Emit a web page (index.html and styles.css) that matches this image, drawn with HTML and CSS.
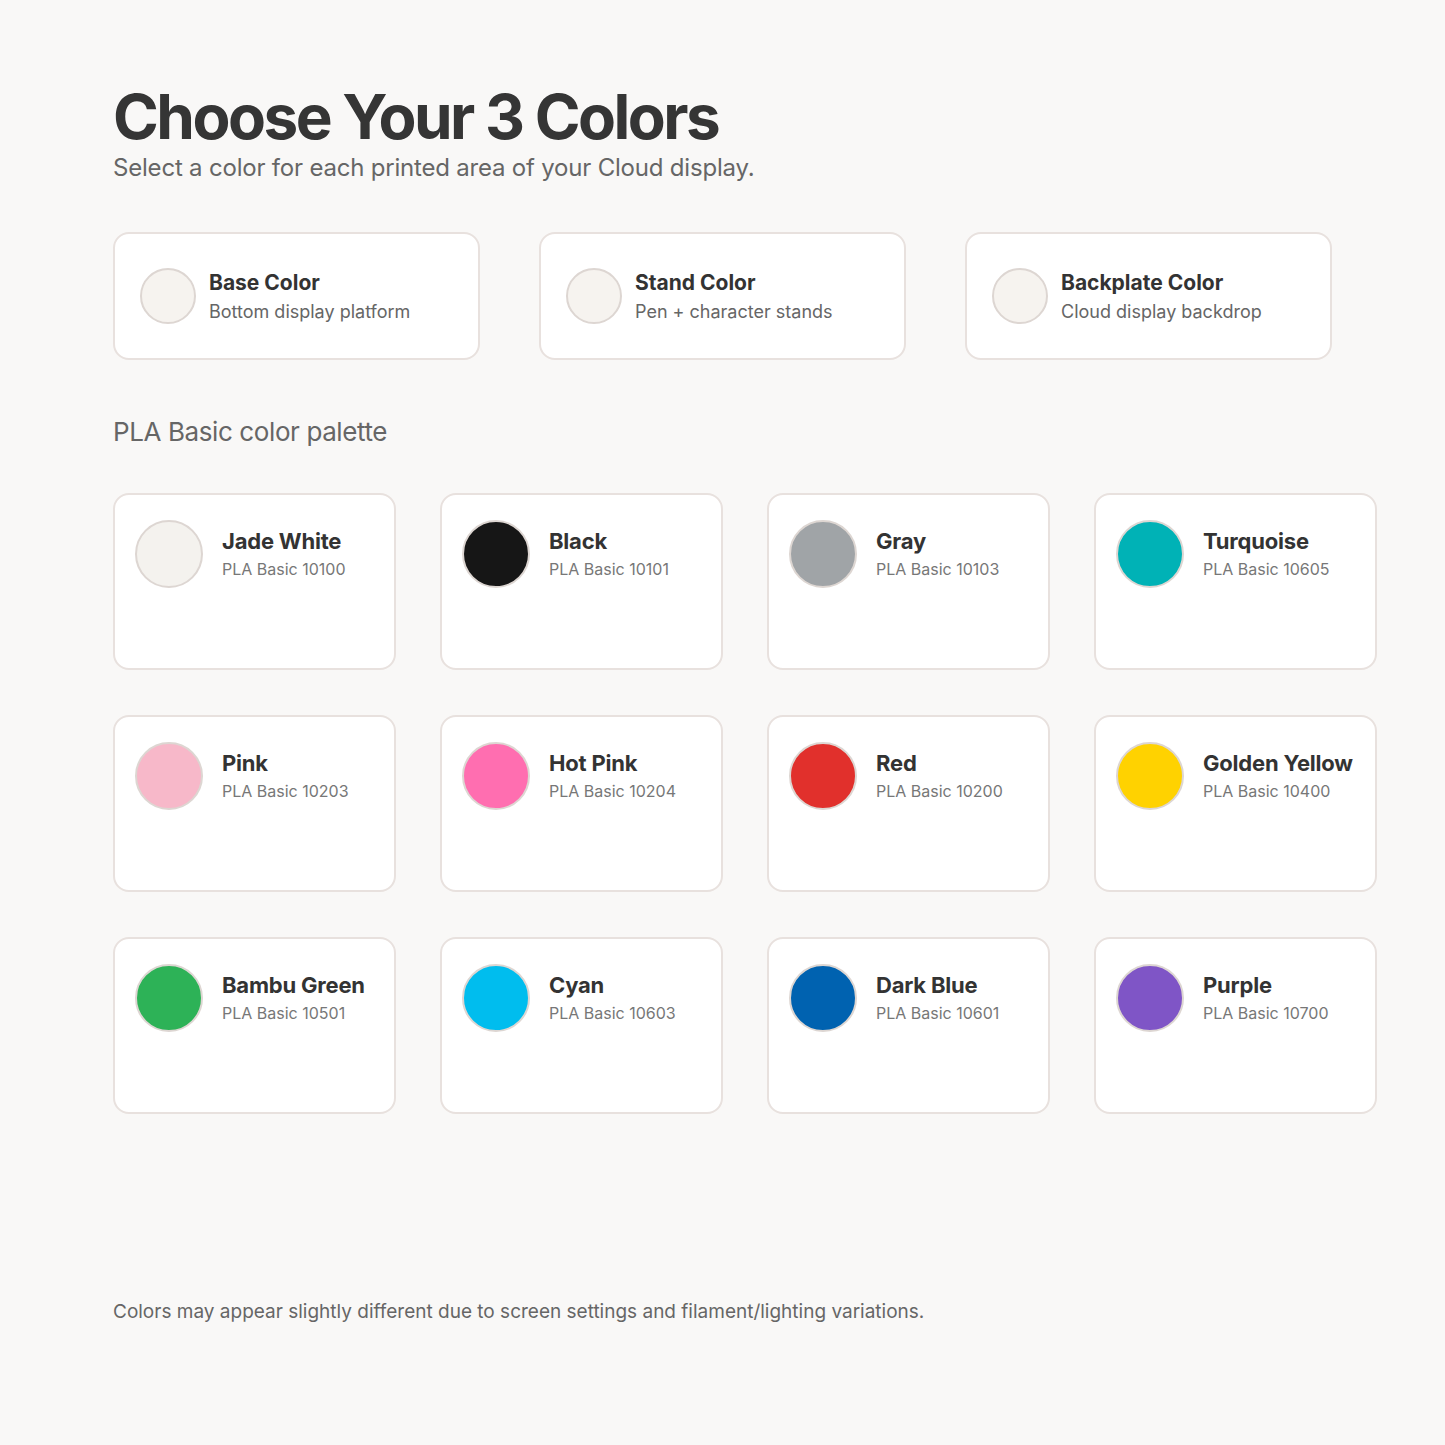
FILE: index.html
```html
<!DOCTYPE html>
<html lang="en">
<head>
  <meta charset="UTF-8" />
  <meta name="viewport" content="width=device-width, initial-scale=1.0" />
  <title>Choose Your 3 Colors</title>
  <link rel="stylesheet" href="styles.css">
</head>
<body>
  <div class="container">
    <h1 class="page-title">Choose Your 3 Colors</h1>
    <p class="page-sub">Select a color for each printed area of your Cloud display.</p>

    <div class="target-grid">
      <div class="target-card">
        <div class="swatch swatch-lg"></div>
        <div>
          <div class="target-name">Base Color</div>
          <div class="target-desc">Bottom display platform</div>
        </div>
      </div>
      <div class="target-card">
        <div class="swatch swatch-lg"></div>
        <div>
          <div class="target-name">Stand Color</div>
          <div class="target-desc">Pen + character stands</div>
        </div>
      </div>
      <div class="target-card">
        <div class="swatch swatch-lg"></div>
        <div>
          <div class="target-name">Backplate Color</div>
          <div class="target-desc">Cloud display backdrop</div>
        </div>
      </div>
    </div>

    <div class="palette-title">PLA Basic color palette</div>

    <div class="palette-grid">
      <div class="color-card"><div class="swatch" style="background:#f4f2ee"></div><div><div class="color-name">Jade White</div><div class="color-code">PLA Basic 10100</div></div></div>
      <div class="color-card"><div class="swatch" style="background:#161616"></div><div><div class="color-name">Black</div><div class="color-code">PLA Basic 10101</div></div></div>
      <div class="color-card"><div class="swatch" style="background:#a0a4a7"></div><div><div class="color-name">Gray</div><div class="color-code">PLA Basic 10103</div></div></div>
      <div class="color-card"><div class="swatch" style="background:#00b2b6"></div><div><div class="color-name">Turquoise</div><div class="color-code">PLA Basic 10605</div></div></div>
      <div class="color-card"><div class="swatch" style="background:#f7b8c9"></div><div><div class="color-name">Pink</div><div class="color-code">PLA Basic 10203</div></div></div>
      <div class="color-card"><div class="swatch" style="background:#ff6eb0"></div><div><div class="color-name">Hot Pink</div><div class="color-code">PLA Basic 10204</div></div></div>
      <div class="color-card"><div class="swatch" style="background:#e1302c"></div><div><div class="color-name">Red</div><div class="color-code">PLA Basic 10200</div></div></div>
      <div class="color-card"><div class="swatch" style="background:#ffd200"></div><div><div class="color-name">Golden Yellow</div><div class="color-code">PLA Basic 10400</div></div></div>
      <div class="color-card"><div class="swatch" style="background:#2db257"></div><div><div class="color-name">Bambu Green</div><div class="color-code">PLA Basic 10501</div></div></div>
      <div class="color-card"><div class="swatch" style="background:#00bdee"></div><div><div class="color-name">Cyan</div><div class="color-code">PLA Basic 10603</div></div></div>
      <div class="color-card"><div class="swatch" style="background:#0062b0"></div><div><div class="color-name">Dark Blue</div><div class="color-code">PLA Basic 10601</div></div></div>
      <div class="color-card"><div class="swatch" style="background:#7f55c6"></div><div><div class="color-name">Purple</div><div class="color-code">PLA Basic 10700</div></div></div>
    </div>

    <p class="footnote">Colors may appear slightly different due to screen settings and filament/lighting variations.</p>
  </div>
</body>
</html>
```

FILE: styles.css
```css
body {
  background-color: #f9f8f7;
  font-family: Inter, 'Noto Sans', sans-serif;
  color: #333;
  margin: 0;
}
.container {
  padding: 80px 68px 80px 113px;
}
.page-title {
  font-size: 62px;
  font-weight: 700;
  letter-spacing: -2.5px;
  line-height: 1.2;
  color: #353535;
  margin: 0;
}
.page-sub {
  font-size: 24px;
  letter-spacing: -0.2px;
  color: #666;
  margin: 0;
  line-height: 1.2;
}
.target-grid {
  display: grid;
  grid-template-columns: repeat(3, 367px);
  gap: 59px;
  margin-top: 49px;
}
.target-card {
  background: #fff;
  border: 2px solid #e8e1de;
  border-radius: 16px;
  height: 128px;
  box-sizing: border-box;
  display: flex;
  align-items: center;
  gap: 13px;
  padding: 0 25px;
}
.target-name {
  font-size: 21px;
  font-weight: 700;
  color: #333;
}
.target-desc {
  font-size: 18px;
  color: #666;
  margin-top: 6px;
}
.swatch {
  width: 68px;
  height: 68px;
  border-radius: 50%;
  border: 2px solid #ddd6d2;
  box-sizing: border-box;
  flex-shrink: 0;
}
.swatch-lg {
  width: 56px;
  height: 56px;
  background: #f6f3ef;
}
.palette-title {
  font-size: 26px;
  letter-spacing: -0.4px;
  color: #666;
  margin-top: 56px;
}
.palette-grid {
  display: grid;
  grid-template-columns: repeat(4, 283px);
  column-gap: 44px;
  row-gap: 45px;
  margin-top: 46px;
}
.color-card {
  background: #fff;
  border: 2px solid #e8e1de;
  border-radius: 16px;
  height: 177px;
  box-sizing: border-box;
  display: flex;
  align-items: flex-start;
  gap: 19px;
  padding: 25px 20px;
}
.color-name {
  font-size: 22px;
  font-weight: 700;
  letter-spacing: -0.2px;
  color: #333;
  margin-top: 8px;
}
.color-code {
  font-size: 16px;
  color: #777;
  margin-top: 5px;
}
.footnote {
  font-size: 19px;
  color: #666;
  margin: 186px 0 0;
}
```
